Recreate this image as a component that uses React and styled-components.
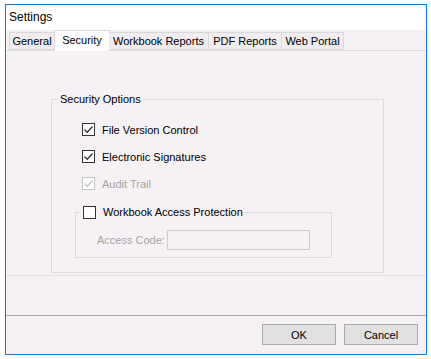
import React, { useState } from "react";
import styled, { createGlobalStyle } from "styled-components";

const GlobalStyle = createGlobalStyle`
  html, body {
    margin: 0;
    padding: 0;
    background: #ffffff;
  }
  body {
    font-family: "Liberation Sans", Arial, sans-serif;
    font-size: 11px;
    color: #000;
  }
`;

const Window = styled.div`
  box-sizing: border-box;
  width: 422px;
  height: 351px;
  margin: 4px 0 0 5px;
  border: 1px solid #1979ca;
  display: flex;
  flex-direction: column;
  background: #f5f1f5;
`;

const TitleBar = styled.div`
  height: 25px;
  flex-shrink: 0;
  background: #ffffff;
  display: flex;
  align-items: center;
  padding: 0 0 1px 3px;
  box-sizing: border-box;
  font-size: 12px;
`;

const TabStrip = styled.div`
  display: flex;
  align-items: flex-end;
  height: 20px;
  padding-left: 3px;
  position: relative;
  z-index: 1;
`;

const Tab = styled.div`
  box-sizing: border-box;
  height: ${(p) => (p.$active ? "21px" : "18px")};
  margin-bottom: ${(p) => (p.$active ? "-1px" : "0")};
  padding: 0 ${(p) => (p.$active ? "5px" : "4px")};
  width: ${(p) => p.$w}px;
  margin-left: ${(p) => (p.$active ? "-1px" : "0")};
  margin-right: ${(p) => (p.$active ? "-1px" : "0")};
  background: ${(p) => (p.$active ? "#ffffff" : "#f0ecf0")};
  border: 1px solid #d9d9d9;
  border-bottom: ${(p) => (p.$active ? "none" : "1px solid #d9d9d9")};
  border-left: ${(p) => (p.$first || p.$active ? "1px solid #d9d9d9" : "none")};
  display: flex;
  align-items: center;
  justify-content: center;
  white-space: nowrap;
  padding-bottom: ${(p) => (p.$active ? "3px" : "0")};
`;

const TabPage = styled.div`
  box-sizing: border-box;
  height: 226px;
  border-top: 1px solid #dcdcdc;
  border-bottom: 1px solid #e2dee2;
  padding: 42px 0 0 45px;
`;

const GroupBox = styled.fieldset`
  box-sizing: border-box;
  width: ${(p) => p.$w}px;
  height: ${(p) => p.$h}px;
  margin: 0;
  padding: ${(p) => p.$pad};
  border: 1px solid #dcdcdc;
  border-radius: 0;
  min-width: 0;
`;

const Legend = styled.legend`
  padding: 0 2px;
  margin-left: ${(p) => p.$indent}px;
  line-height: 13px;
  display: flex;
  align-items: center;
`;

const OptionList = styled.div`
  display: flex;
  flex-direction: column;
  gap: 14px;
  padding-left: 30px;
`;

const CheckRow = styled.label`
  display: flex;
  align-items: center;
  gap: 7px;
  height: 13px;
  color: ${(p) => (p.$disabled ? "#a6a6a6" : "#000")};
`;

const Box = styled.span`
  box-sizing: border-box;
  width: 13px;
  height: 13px;
  border: 1px solid ${(p) => (p.$disabled ? "#c4c4c4" : "#333333")};
  background: #ffffff;
  display: flex;
  align-items: center;
  justify-content: center;
  flex-shrink: 0;
`;

const AccessRow = styled.div`
  display: flex;
  align-items: center;
  gap: 2px;
  padding-left: 21px;
  color: #a6a6a6;
`;

const CodeInput = styled.div`
  box-sizing: border-box;
  width: 143px;
  height: 20px;
  border: 1px solid #cccccc;
  background: #f5f1f5;
`;

const Footer = styled.div`
  flex: 1;
  margin-top: 39px;
  border-top: 1px solid #a7a3a7;
  display: flex;
  justify-content: flex-end;
  align-items: flex-start;
  gap: 8px;
  padding: 8px 8px 0 0;
`;

const Button = styled.button`
  box-sizing: border-box;
  width: 74px;
  height: 21px;
  background: #e1e1e1;
  border: 1px solid #adadad;
  border-radius: 0;
  font-family: "Liberation Sans", Arial, sans-serif;
  font-size: 11px;
  color: #000;
  padding: 0;
`;

function CheckBox({ checked, disabled }) {
  const color = disabled ? "#c4c4c4" : "#333333";
  return (
    <Box $disabled={disabled}>
      {checked && (
        <svg width="11" height="11" viewBox="0 0 11 11">
          <path d="M1.5 5.5 L4.2 8.2 L9.5 2.5" fill="none" stroke={color} strokeWidth="1.3" />
        </svg>
      )}
    </Box>
  );
}

const tabs = [
  { name: "General", w: 46 },
  { name: "Security", w: 56 },
  { name: "Workbook Reports", w: 100 },
  { name: "PDF Reports", w: 73 },
  { name: "Web Portal", w: 62 },
];

export default function App() {
  const [active] = useState("Security");

  return (
    <>
      <GlobalStyle />
      <Window>
        <TitleBar>Settings</TitleBar>
        <TabStrip>
          {tabs.map((t, i) => (
            <Tab key={t.name} $w={t.w} $first={i === 0} $active={t.name === active}>
              {t.name}
            </Tab>
          ))}
        </TabStrip>
        <TabPage>
          <GroupBox $w={333} $h={180} $pad="17px 0 0 0">
            <Legend $indent={6}>Security Options</Legend>
            <OptionList>
              <CheckRow>
                <CheckBox checked />
                File Version Control
              </CheckRow>
              <CheckRow>
                <CheckBox checked />
                Electronic Signatures
              </CheckRow>
              <CheckRow $disabled>
                <CheckBox checked disabled />
                Audit Trail
              </CheckRow>
              <GroupBox $w={257} $h={52} $pad="11px 0 0 0" style={{ marginLeft: -7, marginTop: 2 }}>
                <Legend $indent={5}>
                  <CheckRow>
                    <CheckBox />
                    Workbook Access Protection
                  </CheckRow>
                </Legend>
                <AccessRow>
                  Access Code:
                  <CodeInput />
                </AccessRow>
              </GroupBox>
            </OptionList>
          </GroupBox>
        </TabPage>
        <Footer>
          <Button>OK</Button>
          <Button>Cancel</Button>
        </Footer>
      </Window>
    </>
  );
}
